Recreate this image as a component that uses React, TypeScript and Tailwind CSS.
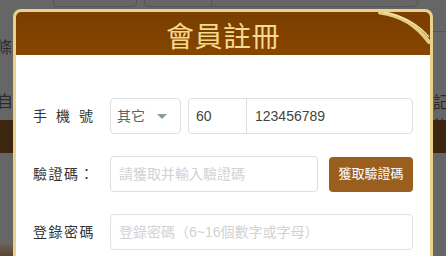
import React from 'react';

const cjk = { fontFamily: '"Liberation Sans", "Noto Sans CJK TC", sans-serif' };

function Backdrop() {
  return (
    <div className="absolute inset-0 bg-[#666666] overflow-hidden" style={cjk}>
      <div className="absolute left-[53px] top-[-4px] w-[84px] h-[11px] border border-[#555] rounded-[4px]" />
      <div className="absolute left-[144px] top-[-4px] w-[274px] h-[11px] border border-[#555] rounded-[4px]" />
      <div className="absolute left-[211px] top-0 w-px h-[7px] bg-[#555]" />
      <div className="absolute left-[433px] top-[31px] w-[20px] h-px bg-[#555]" />
      <div className="absolute left-[-4px] top-[36px] text-[16px] text-[#2a2a2a]">條名</div>
      <div className="absolute left-[-3px] top-[90px] text-[16px] text-[#2a2a2a]">自動</div>
      <div className="absolute left-[433px] top-[91px] text-[16px] text-[#2a2a2a]">記錄</div>
      <div className="absolute left-0 right-0 top-[120px] h-[33px] bg-[#3d2610]" />
      <div className="absolute left-0 w-[20px] top-[244px] h-[12px] bg-gradient-to-b from-[#6a6058] to-[#5a4530] rounded-tr-[10px]" />
    </div>
  );
}

function Label({ children }: { children: React.ReactNode }) {
  return <div className="w-[77px] shrink-0 text-[14px] text-[#333] tracking-[1.5px]">{children}</div>;
}

export default function App() {
  return (
    <div className="relative w-[446px] h-[256px] overflow-hidden" style={cjk}>
      <Backdrop />
      <div className="absolute left-[13px] top-[9px] w-[420px] h-[260px] border-[3px] border-[#ead28c] rounded-t-[8px] bg-white overflow-hidden">
        <div className="relative h-[43px] bg-gradient-to-b from-[#783e00] to-[#874500] flex items-center justify-center">
          <span className="text-[28px] leading-none text-[#f4d98e] tracking-[0.5px] mt-[2px]" style={{ fontFamily: '"Noto Sans CJK TC", serif' }}>
            會員註冊
          </span>
          <svg className="absolute right-0 top-0" width="52" height="34" viewBox="0 0 52 34">
            <path d="M2 0.5 C 22 3, 38 12, 51 30" fill="none" stroke="#e6cc80" strokeWidth="4" strokeLinecap="round" />
            <path d="M6 0.5 C 25 3.5, 40 12, 51 25" fill="none" stroke="#f8e8b0" strokeWidth="1.2" />
          </svg>
        </div>
        <div className="pl-[17px] pr-[17px] pt-[43px] flex flex-col gap-[22px]">
          <div className="flex items-center">
            <Label>
              <span className="tracking-[9px]">手機號</span>
            </Label>
            <div className="w-[71px] h-[36px] border border-[#dedede] rounded-[4px] flex items-center justify-between pl-[6px] pr-[13px]">
              <span className="text-[14px] text-[#4f6a6a]">其它</span>
              <span className="w-0 h-0 border-l-[5px] border-r-[5px] border-t-[5px] border-l-transparent border-r-transparent border-t-[#8a9a9a]" />
            </div>
            <div className="ml-[7px] flex-1 h-[36px] border border-[#dedede] rounded-[4px] flex items-center text-[14px] text-[#444]">
              <div className="w-[58px] h-full border-r border-[#dedede] flex items-center pl-[7px]">60</div>
              <div className="pl-[8px]">123456789</div>
            </div>
          </div>
          <div className="flex items-center">
            <Label>驗證碼：</Label>
            <div className="w-[208px] h-[36px] border border-[#dedede] rounded-[4px] flex items-center pl-[8px] text-[14px] text-[#d2d2d2]">
              請獲取并輸入驗證碼
            </div>
            <button className="ml-[11px] flex-1 h-[35px] bg-[#9a5e1f] rounded-[4px] text-white text-[13px]">獲取驗證碼</button>
          </div>
          <div className="flex items-center">
            <Label>登錄密碼</Label>
            <div className="flex-1 h-[36px] border border-[#dedede] rounded-[4px] flex items-center pl-[8px] text-[14px] text-[#d2d2d2]">
              登錄密碼（6~16個數字或字母）
            </div>
          </div>
        </div>
      </div>
    </div>
  );
}
